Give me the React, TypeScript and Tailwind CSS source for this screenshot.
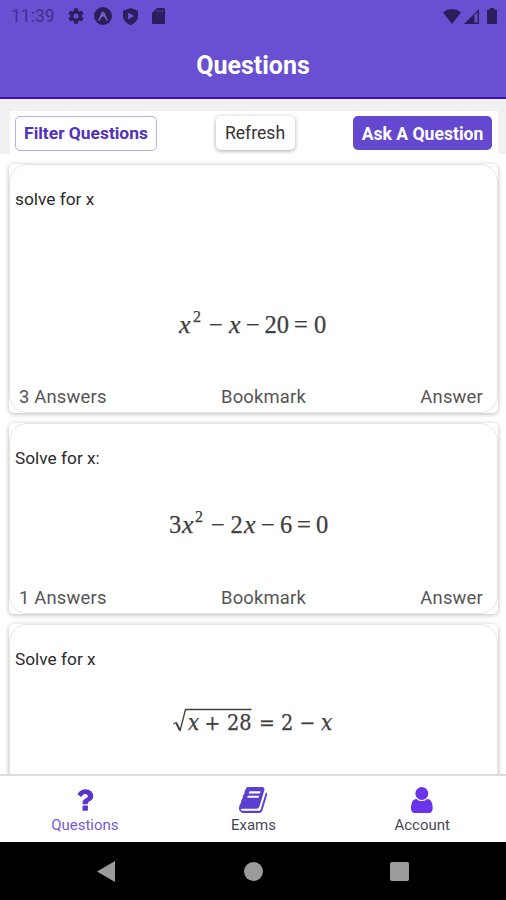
import type { ReactNode } from 'react';

type Glyph = { x: number; y: number; t: string; size?: number; italic?: boolean };

/** Font Awesome 4 glyphs (y axis points up, flipped in TabIcon) */
const ICON_QUESTION =
  'M704 280v-240q0 -16 -12 -28t-28 -12h-240q-16 0 -28 12t-12 28v240q0 16 12 28t28 12h240q16 0 28 -12t12 -28zM1020 880q0 -54 -15.5 -101t-35 -76.5t-55 -59.5t-57.5 -43.5t-61 -35.5q-41 -23 -68.5 -65t-27.5 -67q0 -17 -12 -32.5t-28 -15.5h-240q-15 0 -25.5 18.5t-10.5 37.5v45q0 83 65 156.5t143 108.5q59 27 84 56t25 76q0 42 -46.5 74t-107.5 32q-65 0 -108 -29q-35 -25 -107 -115q-13 -16 -31 -16q-12 0 -25 8l-164 125q-13 10 -15.5 25t5.5 28q160 266 464 266q80 0 161 -31t146 -83t106 -127.5t41 -158.5z';
const ICON_BOOK =
  'M1639 1058q40 -57 18 -129l-275 -906q-19 -64 -76.5 -107.5t-122.5 -43.5h-923q-77 0 -148.5 53.5t-99.5 131.5q-24 67 -2 127q0 4 3 27t4 37q1 8 -3 21.5t-3 19.5q2 11 8 21t16.5 23.5t16.5 23.5q23 38 45 91.5t30 91.5q3 10 0.5 30t-0.5 28q3 11 17 28t17 23q21 36 42 92t25 90q1 9 -2.5 32t0.5 28q4 13 22 30.5t22 22.5q19 26 42.5 84.5t27.5 96.5q1 8 -3 25.5t-2 26.5q2 8 9 18t18 23t17 21q8 12 16.5 30.5t15 35t16 36t19.5 32t26.5 23.5t36 11.5t47.5 -5.5l-1 -3q38 9 51 9h761q74 0 114 -56t18 -130l-274 -906q-36 -119 -71.5 -153.5t-128.5 -34.5h-869q-27 0 -38 -15q-11 -16 -1 -43q24 -70 144 -70h923q29 0 56 15.5t35 41.5l300 987q7 22 5 57q38 -15 59 -43zM575 1056q-4 -13 2 -22.5t20 -9.5h608q13 0 25.5 9.5t16.5 22.5l21 64q4 13 -2 22.5t-20 9.5h-608q-13 0 -25.5 -9.5t-16.5 -22.5zM492 800q-4 -13 2 -22.5t20 -9.5h608q13 0 25.5 9.5t16.5 22.5l21 64q4 13 -2 22.5t-20 9.5h-608q-13 0 -25.5 -9.5t-16.5 -22.5z';
const ICON_USER =
  'M1280 137q0 -109 -62.5 -187t-150.5 -78h-854q-88 0 -150.5 78t-62.5 187q0 85 8.5 160.5t31.5 152t58.5 131t94 89t134.5 34.5q131 -128 313 -128t313 128q76 0 134.5 -34.5t94 -89t58.5 -131t31.5 -152t8.5 -160.5zM1024 1024q0 -159 -112.5 -271.5t-271.5 -112.5t-271.5 112.5t-112.5 271.5t112.5 271.5t271.5 112.5t271.5 -112.5t112.5 -271.5z';

const TABS = [
  { label: 'Questions', path: ICON_QUESTION, width: 1028, icon: 'text-[#5a35cc]', text: 'text-[#7459d6]' },
  { label: 'Exams', path: ICON_BOOK, width: 1664, icon: 'text-[#5a3fd0]', text: 'text-[#4a4658]' },
  { label: 'Account', path: ICON_USER, width: 1280, icon: 'text-[#6a34ea]', text: 'text-[#4a4658]' },
];

const TabIcon = ({ path, width, className }: { path: string; width: number; className: string }) => (
  <svg viewBox={`0 -1408 ${width} 1536`} className={`h-[26px] ${className}`} fill="currentColor">
    <path transform="scale(1,-1)" d={path} />
  </svg>
);

const StatusBar = () => (
  <div className="flex h-8 items-center justify-between pl-[11px] pr-[9px] text-[#2a1f5c]">
    <div className="flex items-center">
      <span className="w-[57px] text-[17.5px] leading-8 text-[#40318a]">11:39</span>
      <svg width="16" height="16" viewBox="2 2 20 20" fill="currentColor">
        <path d="M19.14 12.94c.04-.3.06-.61.06-.94s-.02-.64-.07-.94l2.03-1.58a.49.49 0 0 0 .12-.61l-1.92-3.32a.49.49 0 0 0-.59-.22l-2.39.96c-.5-.38-1.03-.7-1.62-.94l-.36-2.54a.48.48 0 0 0-.48-.41h-3.84c-.24 0-.43.17-.47.41l-.36 2.54c-.59.24-1.13.57-1.62.94l-2.39-.96a.49.49 0 0 0-.59.22L2.74 8.87c-.12.21-.08.47.12.61l2.03 1.58c-.05.3-.09.63-.09.94s.02.64.07.94l-2.03 1.58a.49.49 0 0 0-.12.61l1.92 3.32c.12.22.37.29.59.22l2.39-.96c.5.38 1.03.7 1.62.94l.36 2.54c.05.24.24.41.48.41h3.84c.24 0 .44-.17.47-.41l.36-2.54c.59-.24 1.13-.56 1.62-.94l2.39.96c.22.08.47 0 .59-.22l1.92-3.32a.49.49 0 0 0-.12-.61zM12 15.2a3.2 3.2 0 1 1 0-6.4 3.2 3.2 0 0 1 0 6.4z" />
      </svg>
      <svg className="ml-2.5" width="18" height="18" viewBox="0 0 18 18">
        <circle cx="9" cy="9" r="9" fill="currentColor" />
        <path d="M5 13C6.600 11.500 7.200 6 9 5.200 10.800 6 11.400 11.500 13 13M7.600 9.500 9 7.800 10.400 9.500" fill="none" stroke="#7f69cc" strokeWidth="1.4" strokeLinecap="round" />
      </svg>
      <svg className="ml-[11px]" width="15" height="17" viewBox="0 0 14 17" preserveAspectRatio="none">
        <path d="M7 0 0 2.7V8c0 4 3 7.700 7 9 4-1.300 7-5 7-9V2.700z" fill="currentColor" />
        <path d="M4.600 4.600v7l6-3.500z" fill="#6950cc" />
      </svg>
      <svg className="ml-3.5" width="13" height="16" viewBox="0 0 13 16">
        <path d="M5 0h6.500Q13 0 13 1.500v13q0 1.500-1.500 1.500h-10Q0 16 0 14.500V5z" fill="currentColor" />
        <path d="M5.300 2.200v2M8 2.200v2M10.600 2.200v2" stroke="#5a45ae" strokeWidth="1" />
      </svg>
    </div>
    <div className="flex items-center">
      <svg width="18" height="15" viewBox="0 0 18 15" fill="currentColor">
        <path d="M9 15 0 3.400C5.500-1.100 12.500-1.100 18 3.400z" />
      </svg>
      <svg className="ml-[3px]" width="15" height="15" viewBox="0 0 15 15">
        <path d="M0 15 15 0v15z" fill="currentColor" />
        <path d="M10.500 6.200 13.500 3v10.600h-3z" fill="#6950cc" />
      </svg>
      <svg className="ml-2" width="10" height="16" viewBox="0 0 10 16" fill="currentColor">
        <path d="M3 0h4v1.600h2q1 0 1 1V15q0 1-1 1H1q-1 0-1-1V2.600q0-1 1-1h2z" />
      </svg>
    </div>
  </div>
);

/** Formula picture, 180 x 32 */
const Formula = ({ glyphs, font, children }: { glyphs: Glyph[]; font: string; children?: ReactNode }) => (
  <svg width="180" height="32" viewBox="0 0 180 32" className={font} fill="#404040">
    {glyphs.map((g, i) => (
      <text
        key={i}
        x={g.x}
        y={g.y}
        fontSize={g.size ?? 24.5}
        fontStyle={g.italic ? 'italic' : 'normal'}
        stroke="#404040"
        strokeWidth="0.25"
      >
        {g.t}
      </text>
    ))}
    {children}
  </svg>
);

const SERIF = "font-['Liberation_Serif',serif]";
const CAMBRIA = "font-['DejaVu_Serif_Condensed','DejaVu_Serif',serif]";

const QuestionCard = ({ title, answers, height, gap, children }: {
  title: string;
  answers?: string;
  height: string;
  gap: string;
  children: ReactNode;
}) => (
  <div className={`shrink-0 rounded-[5px] bg-white shadow-[0_1px_5px_rgba(0,0,0,0.28)] ${height}`}>
    <div className="flex h-full flex-col rounded-[18px] border border-[#e5e5e5] px-[5px] pt-[22px]">
      <p className="text-[17.3px] leading-6 text-[#2b2b2b]">{title}</p>
      <div className={`flex justify-center ${gap}`}>{children}</div>
      {answers && (
        <div className="mt-auto flex justify-between pb-[3px] pl-1 pr-[9px] text-[18.4px] leading-6 tracking-[0.2px] text-[#555]">
          <span>{answers}</span>
          <span>Bookmark</span>
          <span>Answer</span>
        </div>
      )}
    </div>
  </div>
);

export default function App() {
  return (
    <div className="flex h-[900px] w-[506px] flex-col overflow-hidden bg-white font-['Roboto',sans-serif]">
      <header className="h-[99px] shrink-0 border-b-2 border-[#3f12b8] bg-[#6950d2]">
        <StatusBar />
        <h1 className="mt-[18px] text-center text-[25px] font-bold leading-8 text-white">Questions</h1>
      </header>

      <div className="h-[55px] shrink-0 bg-[#f1f1f1] pl-2.5 pr-2 pt-3">
        <div className="flex h-[43px] items-start justify-between bg-white pl-[5px] pr-1.5 pt-[5px]">
          <button className="h-[35px] w-[142px] whitespace-nowrap rounded-[5px] border border-[#b9adeb] text-[17.4px] font-bold text-[#5131bd]">
            Filter Questions
          </button>
          <button className="h-[34px] w-[79px] rounded-[5px] bg-white pt-px text-[17.6px] text-[#333] shadow-[0_1px_4px_rgba(0,0,0,0.35)]">
            Refresh
          </button>
          <button className="h-[34px] w-[139px] whitespace-nowrap rounded-[5px] bg-[#6449d0] pt-0.5 text-[17.6px] font-bold text-white">
            Ask A Question
          </button>
        </div>
      </div>

      <main className="flex min-h-0 flex-1 flex-col gap-2.5 overflow-hidden pl-[9px] pr-2 pt-2.5">
        <QuestionCard title="solve for x" answers="3 Answers" height="h-[249px]" gap="mt-[98px]">
          <Formula
            font={SERIF}
            glyphs={[
              { x: 15, y: 24, t: 'x', size: 26, italic: true },
              { x: 29, y: 13, t: '2', size: 16 },
              { x: 45, y: 24, t: '−' },
              { x: 65, y: 24, t: 'x', size: 26, italic: true },
              { x: 82, y: 24, t: '−' },
              { x: 100.5, y: 24, t: '20' },
              { x: 130, y: 24, t: '=' },
              { x: 150, y: 24, t: '0' },
            ]}
          />
        </QuestionCard>

        <QuestionCard title="Solve for x:" answers="1 Answers" height="h-[191px]" gap="mt-[39px]">
          <Formula
            font={SERIF}
            glyphs={[
              { x: 5, y: 24, t: '3' },
              { x: 18, y: 24, t: 'x', size: 26, italic: true },
              { x: 31, y: 13, t: '2', size: 16 },
              { x: 47, y: 24, t: '−' },
              { x: 66.5, y: 24, t: '2' },
              { x: 80, y: 24, t: 'x', size: 26, italic: true },
              { x: 97, y: 24, t: '−' },
              { x: 116, y: 24, t: '6' },
              { x: 133, y: 24, t: '=' },
              { x: 152, y: 24, t: '0' },
            ]}
          />
        </QuestionCard>

        <QuestionCard title="Solve for x" height="h-[191px]" gap="mt-[35px]">
          <Formula
            font={CAMBRIA}
            glyphs={[
              { x: 24, y: 23.5, t: 'x', size: 22, italic: true },
              { x: 40.5, y: 23.5, t: '+', size: 21 },
              { x: 63, y: 23.5, t: '28', size: 21.5 },
              { x: 95, y: 23.5, t: '=', size: 21 },
              { x: 117, y: 23.5, t: '2', size: 21.5 },
              { x: 135.5, y: 23.5, t: '−', size: 21 },
              { x: 157, y: 23.5, t: 'x', size: 22, italic: true },
            ]}
          >
            <path d="M9 18 12 16.500" fill="none" stroke="#404040" strokeWidth="1" />
            <path d="M12 16.500 16 24.500" fill="none" stroke="#404040" strokeWidth="2" />
            <path d="M16 25 21.500 3.500H87.500" fill="none" stroke="#404040" strokeWidth="1.300" />
          </Formula>
        </QuestionCard>
      </main>

      <nav className="z-10 flex h-[68px] shrink-0 border-t-2 border-[#dcdcdc] bg-white">
        {TABS.map((tab) => (
          <div key={tab.label} className="flex flex-1 flex-col items-center pl-px pt-[11px]">
            <TabIcon path={tab.path} width={tab.width} className={tab.icon} />
            <span className={`mt-0.5 text-[15px] leading-5 ${tab.text}`}>{tab.label}</span>
          </div>
        ))}
      </nav>

      <div className="flex h-[58px] shrink-0 items-center justify-between bg-black px-[97px] text-[#9b9b9b]">
        <svg width="18" height="21" viewBox="0 0 18 21" fill="currentColor">
          <path d="M18 0v21L0 10.500z" />
        </svg>
        <span className="ml-0.5 size-[19px] rounded-full bg-[#9b9b9b]" />
        <span className="size-[19px] rounded-[2px] bg-[#9b9b9b]" />
      </div>
    </div>
  );
}
